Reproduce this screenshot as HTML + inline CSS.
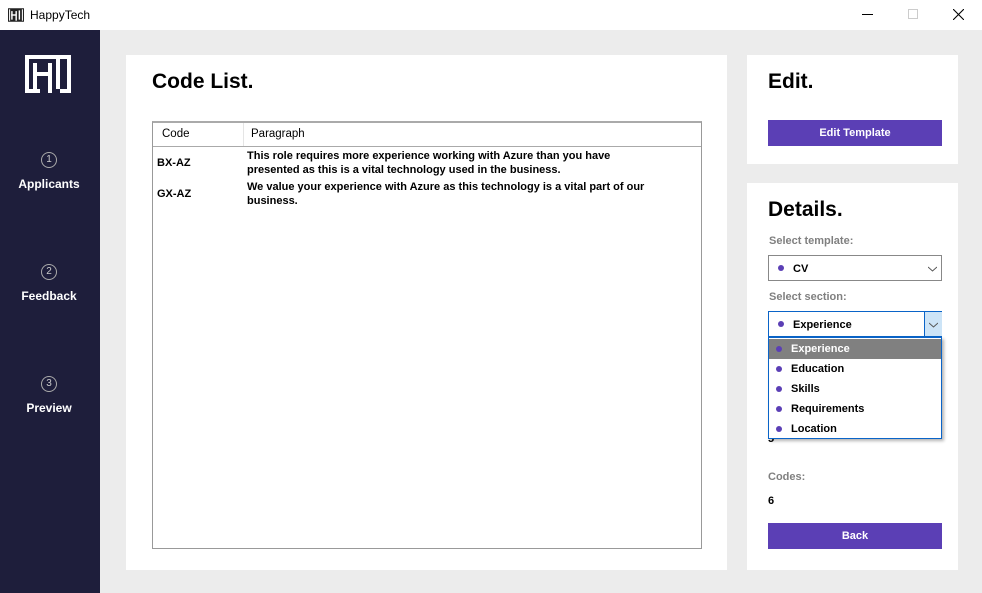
<!DOCTYPE html>
<html><head><style>
*{margin:0;padding:0;box-sizing:border-box}
body{width:982px;height:593px;position:relative;background:#ececec;font-family:"Liberation Sans",Arial,sans-serif;overflow:hidden}
.abs{position:absolute}
.b{font-weight:bold}
.card{position:absolute;background:#fff}
.dot{display:inline-block;width:6px;height:6px;border-radius:50%;background:#5b3fb5;position:absolute}
</style></head><body>
<div class="abs" style="left:0;top:0;width:982px;height:30px;background:#fff"></div>
<svg class="abs" style="left:8px;top:7px" width="16" height="16" viewBox="0 0 45 38"><rect width="45" height="38" fill="#222"/><g fill="#fff"><rect x="3" y="3" width="3" height="32"/><rect x="9" y="8" width="4" height="24"/><rect x="9" y="17" width="15" height="4"/><rect x="21" y="8" width="4" height="27"/><rect x="30" y="6" width="4" height="26"/><rect x="39" y="3" width="3" height="32"/></g></svg>
<div class="abs" style="left:30px;top:8px;font-size:12px;color:#000">HappyTech</div>
<div class="abs" style="left:862px;top:14px;width:11px;height:1px;background:#000"></div>
<div class="abs" style="left:908px;top:9px;width:10px;height:10px;border:1px solid #ccc"></div>
<svg class="abs" style="left:953px;top:9px" width="11" height="11"><path d="M0 0L11 11M11 0L0 11" stroke="#000" stroke-width="1.1"/></svg>

<div class="abs" style="left:0;top:30px;width:100px;height:563px;background:#1e1e3b"></div>
<svg class="abs" style="left:25px;top:55px" width="46" height="38" viewBox="0 0 46 38"><g fill="#fff">
<rect x="0" y="0" width="46" height="4"/><rect x="0" y="0" width="4" height="38"/><rect x="0" y="34" width="15" height="4"/>
<rect x="8" y="8" width="4" height="26"/><rect x="8" y="17" width="18" height="4"/><rect x="23" y="8" width="4" height="30"/>
<rect x="31" y="4" width="4" height="30"/><rect x="42" y="0" width="4" height="38"/><rect x="35" y="34" width="11" height="4"/></g></svg>
<div class="abs" style="left:0;top:152px;width:98px;text-align:center;color:#fff">
<div style="margin:0 auto;width:16px;height:16px;border:1px solid #aaa;border-radius:50%;font-size:10px;line-height:14px;color:#ccc">1</div>
<div class="b" style="font-size:12px;margin-top:9px">Applicants</div></div>
<div class="abs" style="left:0;top:264px;width:98px;text-align:center;color:#fff">
<div style="margin:0 auto;width:16px;height:16px;border:1px solid #aaa;border-radius:50%;font-size:10px;line-height:14px;color:#ccc">2</div>
<div class="b" style="font-size:12px;margin-top:9px">Feedback</div></div>
<div class="abs" style="left:0;top:376px;width:98px;text-align:center;color:#fff">
<div style="margin:0 auto;width:16px;height:16px;border:1px solid #aaa;border-radius:50%;font-size:10px;line-height:14px;color:#ccc">3</div>
<div class="b" style="font-size:12px;margin-top:9px">Preview</div></div>

<div class="card" style="left:126px;top:55px;width:601px;height:515px"></div>
<div class="abs b" style="left:152px;top:70px;font-size:21px">Code List.</div>
<div class="abs" style="left:152px;top:121px;width:550px;height:428px;border:1px solid #999;border-top:2px solid #aaa"></div>
<div class="abs" style="left:153px;top:146px;width:548px;height:1px;background:#aaa"></div>
<div class="abs" style="left:243px;top:123px;width:1px;height:23px;background:#e5e5e5"></div>
<div class="abs" style="left:162px;top:128px;font-size:11.5px">Code</div>
<div class="abs" style="left:251px;top:128px;font-size:11.5px">Paragraph</div>
<div class="abs b" style="left:157px;top:157px;font-size:11px">BX-AZ</div>
<div class="abs b" style="left:247px;top:149px;font-size:11px;line-height:14px;width:400px">This role requires more experience working with Azure than you have presented as this is a vital technology used in the business.</div>
<div class="abs b" style="left:157px;top:188px;font-size:11px">GX-AZ</div>
<div class="abs b" style="left:247px;top:180px;font-size:11px;line-height:14px;width:440px">We value your experience with Azure as this technology is a vital part of our business.</div>

<div class="card" style="left:747px;top:55px;width:211px;height:109px"></div>
<div class="abs b" style="left:768px;top:70px;font-size:21px">Edit.</div>
<div class="abs b" style="left:768px;top:120px;width:174px;height:26px;background:#5b3fb5;color:#fff;font-size:11px;text-align:center;line-height:27px">Edit Template</div>

<div class="card" style="left:747px;top:183px;width:211px;height:387px"></div>
<div class="abs b" style="left:768px;top:198px;font-size:21px">Details.</div>
<div class="abs b" style="left:769px;top:235px;font-size:11px;color:#808080">Select template:</div>
<div class="abs" style="left:768px;top:255px;width:174px;height:26px;border:1px solid #888"><span class="dot" style="left:9px;top:9px"></span><span class="abs b" style="left:24px;top:7px;font-size:11px">CV</span><svg class="abs" style="left:159px;top:10px" width="9" height="6"><path d="M0 1l4.5 4L9 1" stroke="#555" fill="none"/></svg></div>
<div class="abs b" style="left:769px;top:291px;font-size:11px;color:#808080">Select section:</div>
<div class="abs" style="left:768px;top:311px;width:174px;height:26px;border:1px solid #0a64c8"><span class="dot" style="left:9px;top:9px"></span><span class="abs b" style="left:24px;top:7px;font-size:11px">Experience</span><div class="abs" style="left:155px;top:0;width:18px;height:24px;background:#cce4f7;border-left:1px solid #0a64c8"></div><svg class="abs" style="left:160px;top:10px" width="9" height="6"><path d="M0 1l4.5 4L9 1" stroke="#555" fill="none"/></svg></div>
<div class="abs b" style="left:768px;top:433px;font-size:11px">5</div>
<div class="abs b" style="left:768px;top:471px;font-size:11px;color:#808080">Codes:</div>
<div class="abs b" style="left:768px;top:495px;font-size:11px">6</div>
<div class="abs b" style="left:768px;top:523px;width:174px;height:26px;background:#5b3fb5;color:#fff;font-size:11px;text-align:center;line-height:27px">Back</div>

<div class="abs" style="left:768px;top:337px;width:174px;height:102px;background:#fff;border:1px solid #0a64c8;box-shadow:2px 2px 3px rgba(0,0,0,.3)">
<div class="abs" style="left:0;top:1px;width:172px;height:20px;background:#808080"></div>
<span class="dot" style="left:7px;top:8px"></span><span class="abs b" style="left:22px;top:5px;font-size:11px;color:#fff">Experience</span>
<span class="dot" style="left:7px;top:28px"></span><span class="abs b" style="left:22px;top:25px;font-size:11px">Education</span>
<span class="dot" style="left:7px;top:48px"></span><span class="abs b" style="left:22px;top:45px;font-size:11px">Skills</span>
<span class="dot" style="left:7px;top:68px"></span><span class="abs b" style="left:22px;top:65px;font-size:11px">Requirements</span>
<span class="dot" style="left:7px;top:88px"></span><span class="abs b" style="left:22px;top:85px;font-size:11px">Location</span>
</div>
</body></html>
